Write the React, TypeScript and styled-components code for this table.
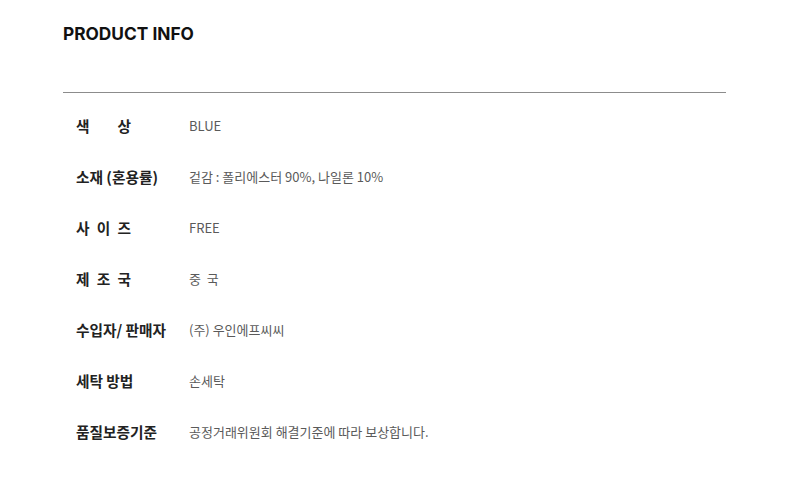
import React from 'react'
import styled, {createGlobalStyle} from 'styled-components'

const GlobalStyle = createGlobalStyle`
  body {
    margin: 0;
    background: #fff;
    font-family: 'Noto Sans CJK KR', 'Noto Sans', sans-serif;
  }
`

// spread: the label letters are spread across a fixed width
const rows = [
  {label: '색상', value: 'BLUE', spread: true},
  {label: '소재 (혼용률)', value: '겉감 : 폴리에스터 90%, 나일론 10%'},
  {label: '사이즈', value: 'FREE', spread: true},
  {label: '제조국', value: '중  국', spread: true},
  {label: '수입자/ 판매자', value: '(주) 우인에프씨씨'},
  {label: '세탁 방법', value: '손세탁'},
  {label: '품질보증기준', value: '공정거래위원회 해결기준에 따라 보상합니다.'},
]

export default function App() {
  return (
    <>
      <GlobalStyle />
      <Section>
        <Title>PRODUCT INFO</Title>
        <Divider />
        <Table>
          {rows.map((r) => (
            <Row key={r.label}>
              <Label>
                {r.spread ? (
                  <Spread>
                    {r.label.split('').map((c, i) => (
                      <span key={i}>{c}</span>
                    ))}
                  </Spread>
                ) : (
                  r.label
                )}
              </Label>
              <Value>{r.value}</Value>
            </Row>
          ))}
        </Table>
      </Section>
    </>
  )
}

const Section = styled.div`
  width: 663px;
  padding: 22px 0 0 63px;
`

const Title = styled.h2`
  margin: 0;
  font-family: 'Inter', 'Noto Sans', sans-serif;
  font-size: 17.3px;
  font-weight: 700;
  line-height: 24px;
  color: #111;
`

const Divider = styled.div`
  height: 1px;
  background: #8c8c8c;
  margin-top: 46px;
`

const Table = styled.div`
  padding: 7px 0 0 13px;
  display: flex;
  flex-direction: column;
`

const Row = styled.div`
  display: flex;
  align-items: center;
  height: 51px;
`

const Label = styled.div`
  width: 113px;
  flex-shrink: 0;
  white-space: pre;
  font-size: 14.7px;
  font-weight: 700;
  color: #222;
`

const Spread = styled.span`
  display: inline-flex;
  justify-content: space-between;
  width: 55px;
`

const Value = styled.div`
  white-space: pre;
  font-size: 13px;
  font-weight: 400;
  color: #5a5a5a;
`
